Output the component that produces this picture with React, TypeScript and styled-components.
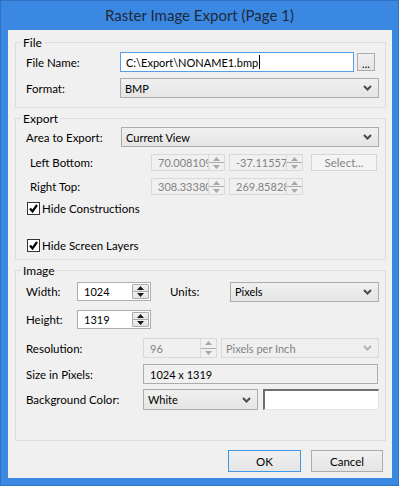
import React from 'react';
import styled, { createGlobalStyle } from 'styled-components';

const GlobalStyle = createGlobalStyle`
  html, body {
    margin: 0;
    padding: 0;
  }
  body {
    font-family: Lato, "Liberation Sans", sans-serif;
    font-size: 11px;
    color: #000;
  }
  * {
    box-sizing: border-box;
  }
`;

function Chevron({ disabled }: { disabled?: boolean }) {
  return (
    <svg width="9" height="6" viewBox="0 0 9 6">
      <polyline
        points="1,1 4.5,4.5 8,1"
        fill="none"
        stroke={disabled ? '#b4b4b4' : '#4a4a4a'}
        strokeWidth="2"
      />
    </svg>
  );
}

function Arrow({ up, disabled }: { up?: boolean; disabled?: boolean }) {
  return (
    <svg width="7" height="4" viewBox="0 0 7 4">
      <polygon
        points={up ? '3.5,0 7,4 0,4' : '0,0 7,0 3.5,4'}
        fill={disabled ? '#a8a8a8' : '#1a1a1a'}
      />
    </svg>
  );
}

function Check() {
  return (
    <svg width="11" height="11" viewBox="0 0 11 11">
      <polyline points="2,5.5 4.5,8.5 9,2" fill="none" stroke="#000" strokeWidth="2.2" />
    </svg>
  );
}

function Spin({ value, width, height, disabled }: { value: string; width: number; height: number; disabled?: boolean }) {
  return (
    <SpinBox $w={width} $h={height} $disabled={disabled}>
      <SpinValue $disabled={disabled}>{value}</SpinValue>
      <Spinner $disabled={disabled}>
        <SpinHalf $disabled={disabled}>
          <Arrow up disabled={disabled} />
        </SpinHalf>
        <SpinHalf $disabled={disabled}>
          <Arrow disabled={disabled} />
        </SpinHalf>
      </Spinner>
    </SpinBox>
  );
}

function Select({ value, width, height, disabled }: { value: string; width?: number; height: number; disabled?: boolean }) {
  return (
    <ComboBox $w={width} $h={height} $disabled={disabled}>
      <span>{value}</span>
      <Chevron disabled={disabled} />
    </ComboBox>
  );
}

export default function App() {
  return (
    <>
      <GlobalStyle />
      <Window>
        <TitleBar>Raster Image Export (Page 1)</TitleBar>
        <Client>
          <Group $pt={9} $pb={9}>
            <Legend>File</Legend>
            <Row $h={20}>
              <Label $w={94}>File Name:</Label>
              <TextBox>
                C:\Export\NONAME1.bmp<Caret />
              </TextBox>
              <BrowseButton>...</BrowseButton>
            </Row>
            <Row $h={20} $mt={6}>
              <Label $w={94}>Format:</Label>
              <Select value="BMP" height={20} />
            </Row>
          </Group>

          <Group $pt={8} $pb={6}>
            <Legend>Export</Legend>
            <Row $h={20}>
              <Label $w={95}>Area to Export:</Label>
              <Select value="Current View" height={20} />
            </Row>
            <Row $h={17} $mt={7}>
              <Label $w={121} $indent={4}>Left Bottom:</Label>
              <Spin value="70.0081095" width={74} height={17} disabled />
              <Spin value="-37.1155782" width={74} height={17} disabled />
              <PushButton $w={66} $h={17} $disabled $ml={4}>Select...</PushButton>
            </Row>
            <Row $h={17} $mt={7}>
              <Label $w={121} $indent={4}>Right Top:</Label>
              <Spin value="308.3338023" width={74} height={17} disabled />
              <Spin value="269.8582834" width={74} height={17} disabled />
            </Row>
            <CheckRow $mt={6}>
              <CheckBox>
                <Check />
              </CheckBox>
              Hide Constructions
            </CheckRow>
            <CheckRow $mt={22}>
              <CheckBox>
                <Check />
              </CheckBox>
              Hide Screen Layers
            </CheckRow>
          </Group>

          <Group $pt={11} $pb={30}>
            <Legend>Image</Legend>
            <Row $h={19}>
              <Label $w={51}>Width:</Label>
              <Spin value="1024" width={74} height={19} />
              <Label $w={60} $indent={15}>Units:</Label>
              <Select value="Pixels" height={20} />
            </Row>
            <Row $h={19} $mt={9}>
              <Label $w={51}>Height:</Label>
              <Spin value="1319" width={74} height={19} />
            </Row>
            <Row $h={20} $mt={9}>
              <Label $w={117}>Resolution:</Label>
              <Spin value="96" width={74} height={20} disabled />
              <Select value="Pixels per Inch" height={20} disabled />
            </Row>
            <Row $h={20} $mt={6}>
              <Label $w={117}>Size in Pixels:</Label>
              <ReadOnlyField>1024 x 1319</ReadOnlyField>
            </Row>
            <Row $h={21} $mt={5}>
              <Label $w={117}>Background Color:</Label>
              <Select value="White" width={115} height={21} />
              <ColorWell />
            </Row>
          </Group>

          <ButtonRow>
            <PushButton $w={73} $h={22} $default>OK</PushButton>
            <PushButton $w={72} $h={22}>Cancel</PushButton>
          </ButtonRow>
        </Client>
      </Window>
    </>
  );
}

const Window = styled.div`
  width: 399px;
  height: 486px;
  background: #3b88e3;
  border: 1px solid #2f72c4;
  display: flex;
  flex-direction: column;
`;

const TitleBar = styled.div`
  height: 29px;
  display: flex;
  align-items: center;
  justify-content: center;
  font-size: 15px;
  color: #1c2a3a;
  padding-bottom: 1px;
`;

const Client = styled.div`
  flex: 1;
  margin: 0 6px 7px 7px;
  background: #f0f0f0;
  padding: 12px 6px 0 7px;
  display: flex;
  flex-direction: column;
  gap: 10px;
`;

const Group = styled.div<{ $pt: number; $pb: number }>`
  position: relative;
  border: 1px solid #dcdcdc;
  padding: ${(p) => p.$pt}px 6px ${(p) => p.$pb}px 10px;
  display: flex;
  flex-direction: column;
`;

const Legend = styled.span`
  position: absolute;
  top: -8px;
  left: 5px;
  padding: 0 2px;
  background: #f0f0f0;
  line-height: 15px;
  font-size: 12px;
`;

const Row = styled.div<{ $h: number; $mt?: number }>`
  display: flex;
  align-items: center;
  gap: 4px;
  height: ${(p) => p.$h}px;
  margin-top: ${(p) => p.$mt ?? 0}px;
`;

const Label = styled.div<{ $w: number; $indent?: number }>`
  flex: none;
  width: ${(p) => p.$w - 4}px;
  margin-left: ${(p) => p.$indent ?? 0}px;
  white-space: nowrap;
  font-size: 11.5px;
`;

const TextBox = styled.div`
  width: 234px;
  height: 20px;
  flex: none;
  border: 1px solid #569de5;
  background: #fff;
  padding-left: 5px;
  display: flex;
  align-items: center;
  margin-right: -1px;
`;

const Caret = styled.span`
  display: inline-block;
  width: 1px;
  height: 14px;
  background: #000;
  margin-left: 1px;
`;

const BrowseButton = styled.div`
  width: 18px;
  height: 18px;
  flex: none;
  border: 1px solid #acacac;
  background: linear-gradient(#f0f0f0, #e5e5e5);
  display: flex;
  align-items: center;
  justify-content: center;
  font-size: 11px;
  padding-top: 2px;
`;

const ComboBox = styled.div<{ $w?: number; $h: number; $disabled?: boolean }>`
  ${(p) => (p.$w ? `width: ${p.$w}px; flex: none;` : 'flex: 1;')}
  height: ${(p) => p.$h}px;
  border: 1px solid ${(p) => (p.$disabled ? '#d9d9d9' : '#acacac')};
  background: ${(p) => (p.$disabled ? '#efefef' : 'linear-gradient(#f0f0f0, #e5e5e5)')};
  color: ${(p) => (p.$disabled ? '#838383' : '#000')};
  display: flex;
  align-items: center;
  justify-content: space-between;
  padding: 0 6px 0 4px;
`;

const SpinBox = styled.div<{ $w: number; $h: number; $disabled?: boolean }>`
  width: ${(p) => p.$w}px;
  height: ${(p) => p.$h}px;
  flex: none;
  border: 1px solid ${(p) => (p.$disabled ? '#d9d9d9' : '#abadb3')};
  background: ${(p) => (p.$disabled ? '#f0f0f0' : '#fff')};
  display: flex;
  overflow: hidden;
`;

const SpinValue = styled.div<{ $disabled?: boolean }>`
  flex: 1;
  min-width: 0;
  overflow: hidden;
  white-space: nowrap;
  display: flex;
  align-items: center;
  padding-left: 6px;
  color: ${(p) => (p.$disabled ? '#838383' : '#000')};
`;

const Spinner = styled.div<{ $disabled?: boolean }>`
  flex: none;
  width: ${(p) => (p.$disabled ? 16 : 17)}px;
  display: flex;
  flex-direction: column;
  ${(p) => (p.$disabled ? 'border-left: 1px solid #d9d9d9;' : 'margin: 1px; border: 1px solid #acacac; border-radius: 1px;')}
`;

const SpinHalf = styled.div<{ $disabled?: boolean }>`
  flex: 1;
  display: flex;
  align-items: center;
  justify-content: center;
  background: ${(p) => (p.$disabled ? '#f0f0f0' : 'linear-gradient(#f2f2f2, #e3e3e3)')};
  & + & {
    border-top: 1px solid ${(p) => (p.$disabled ? '#e2e2e2' : '#acacac')};
  }
`;

const PushButton = styled.div<{ $w: number; $h: number; $disabled?: boolean; $default?: boolean; $ml?: number }>`
  width: ${(p) => p.$w}px;
  height: ${(p) => p.$h}px;
  flex: none;
  margin-left: ${(p) => p.$ml ?? 0}px;
  border: 1px solid ${(p) => (p.$default ? '#3c98e6' : p.$disabled ? '#d5d5d5' : '#acacac')};
  background: ${(p) => (p.$disabled ? '#f4f4f4' : 'linear-gradient(#f0f0f0, #e5e5e5)')};
  color: ${(p) => (p.$disabled ? '#838383' : '#000')};
  display: flex;
  align-items: center;
  justify-content: center;
  font-size: 11.5px;
`;

const CheckRow = styled.div<{ $mt: number }>`
  display: flex;
  align-items: center;
  height: 15px;
  margin-top: ${(p) => p.$mt}px;
  padding-left: 1px;
  gap: 2px;
  font-size: 11.5px;
`;

const CheckBox = styled.div`
  width: 13px;
  height: 13px;
  border: 1px solid #333;
  background: #fff;
  display: flex;
  align-items: center;
  justify-content: center;
`;

const ReadOnlyField = styled.div`
  flex: 1;
  height: 20px;
  border: 1px solid #acacac;
  background: #f0f0f0;
  display: flex;
  align-items: center;
  padding-left: 6px;
  margin-right: 1px;
`;

const ColorWell = styled.div`
  flex: 1;
  height: 21px;
  margin-left: 1px;
  background: #fff;
  border-top: 2px solid #6e6e6e;
  border-left: 2px solid #6e6e6e;
  border-right: 1px solid #e3e3e3;
  border-bottom: 1px solid #e3e3e3;
`;

const ButtonRow = styled.div`
  display: flex;
  justify-content: flex-end;
  gap: 10px;
  margin-top: -1px;
  padding-right: 3px;
`;
